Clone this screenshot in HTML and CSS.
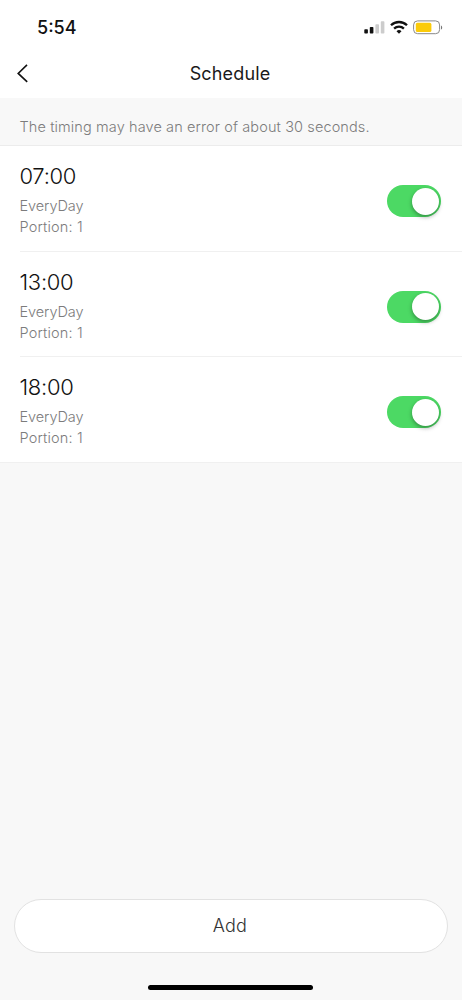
FILE: index.html
```html
<!DOCTYPE html>
<html lang="en">
<head>
<meta charset="utf-8">
<title>Schedule</title>
<link rel="stylesheet" href="styles.css">
</head>
<body>
<div class="screen">
  <header class="top">
    <div class="status">
      <span class="clock">5:54</span>
      <svg class="indicators" width="80" height="16" viewBox="0 0 80 16">
        <rect x="0.3" y="9.2" width="3.6" height="4.4" rx=".8" fill="#111"/>
        <rect x="5.8" y="7" width="3.6" height="6.6" rx=".8" fill="#111"/>
        <rect x="11.4" y="4.2" width="3.6" height="9.4" rx=".8" fill="#ccc"/>
        <rect x="16.8" y="1.2" width="3.6" height="12.4" rx=".8" fill="#ccc"/>
        <g fill="none" stroke="#111" stroke-width="2.3">
          <path d="M27 5.3a11.4 11.4 0 0 1 16 0"/>
          <path d="M30.1 8.6a7 7 0 0 1 9.8 0"/>
        </g>
        <path d="M32.5 11.2a3.6 3.6 0 0 1 5 0L35 13.7z" fill="#111"/>
        <rect x="49.6" y="0.9" width="26" height="12.8" rx="4" fill="#fff" stroke="#888"/>
        <rect x="51.8" y="2.8" width="15.6" height="9.2" rx="1.6" fill="#fbcb0a"/>
        <path d="M77 5.4c1.6.6 1.6 3.6 0 4.2z" fill="#777"/>
      </svg>
    </div>
    <div class="nav">
      <svg class="back" width="14" height="20" viewBox="0 0 14 20"><path d="M11 0.9L2.2 9.4l9 8.5" fill="none" stroke="#111" stroke-width="1.6"/></svg>
      <h1 class="title">Schedule</h1>
    </div>
  </header>
  <p class="notice">The timing may have an error of about 30 seconds.</p>
  <main class="list">
    <section class="row">
      <div class="info"><div class="time">07:00</div><div class="detail repeat">EveryDay</div><div class="detail">Portion: 1</div></div>
      <div class="toggle"><div class="knob"></div></div>
    </section>
    <section class="row">
      <div class="info"><div class="time">13:00</div><div class="detail repeat">EveryDay</div><div class="detail">Portion: 1</div></div>
      <div class="toggle"><div class="knob"></div></div>
    </section>
    <section class="row">
      <div class="info"><div class="time">18:00</div><div class="detail repeat">EveryDay</div><div class="detail">Portion: 1</div></div>
      <div class="toggle"><div class="knob"></div></div>
    </section>
  </main>
  <footer class="bottom">
    <button class="add">Add</button>
    <div class="home"></div>
  </footer>
</div>
</body>
</html>
```

FILE: styles.css
```css
* { box-sizing: border-box; }
body { margin: 0; font-family: Inter, "Liberation Sans", sans-serif; }
.screen { width: 462px; height: 1000px; display: flex; flex-direction: column; background: #f8f8f8; }
.top { height: 98px; background: #fff; }
.status { height: 50px; display: flex; justify-content: space-between; padding: 17px 18px 0 37px; }
.clock { font-size: 18px; line-height: 22px; font-weight: 500; color: #111; letter-spacing: 0; }
.indicators { margin-top: 3px; }
.nav { height: 48px; display: grid; grid-template-columns: 60px 1fr 60px; align-items: center; }
.back { margin-left: 16px; }
.title { margin: 0 2px 0 0; text-align: center; font-size: 18px; line-height: 24px; font-weight: 400; letter-spacing: .15px; color: #1a1a1a; }
.notice { margin: 0; height: 48px; padding: 19px 19.5px 0; font-size: 14.5px; line-height: 20px; font-weight: 300; letter-spacing: .11px; color: #7c7c7c; border-bottom: 1px solid #ececec; white-space: nowrap; }
.list { height: 316.5px; background: #fff; border-bottom: 1px solid #f0f0f0; }
.row { height: 105.5px; margin-left: 19.5px; padding-right: 21px; display: flex; justify-content: space-between; align-items: flex-start; border-bottom: 1px solid #f0f0f0; }
.row:last-child { border-bottom: 0; }
.info { padding-top: 16px; }
.time { font-size: 22px; line-height: 28px; font-weight: 300; letter-spacing: -.3px; color: #111; margin-bottom: 5px; }
.detail { font-size: 14.5px; line-height: 21px; font-weight: 300; letter-spacing: .15px; color: #7c7c7c; }
.repeat { letter-spacing: -.08px; }
.toggle { width: 54px; height: 32px; margin-top: 39px; border-radius: 16px; background: #4cd964; display: flex; align-items: center; justify-content: flex-end; padding-right: 2px; }
.knob { width: 27px; height: 27px; border-radius: 50%; background: #fff; box-shadow: 0 2px 4px rgba(0,0,0,.35); }
.bottom { margin-top: auto; height: 101px; display: flex; flex-direction: column; align-items: center; }
.add { width: 434px; height: 54px; border: 1px solid #e2e2e2; border-radius: 27px; background: #fff; font: 300 18px/24px Inter, "Liberation Sans", sans-serif; letter-spacing: .2px; color: #333; padding: 0 2px 0 0; }
.home { width: 165px; height: 5px; margin: 32px 1px 0 0; border-radius: 3px; background: #000; }
```
